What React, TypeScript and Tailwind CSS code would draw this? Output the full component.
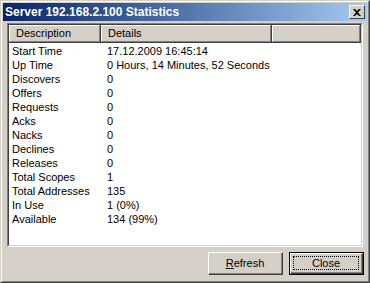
const rows: [string, string][] = [
  ["Start Time", "17.12.2009 16:45:14"],
  ["Up Time", "0 Hours, 14 Minutes, 52 Seconds"],
  ["Discovers", "0"],
  ["Offers", "0"],
  ["Requests", "0"],
  ["Acks", "0"],
  ["Nacks", "0"],
  ["Declines", "0"],
  ["Releases", "0"],
  ["Total Scopes", "1"],
  ["Total Addresses", "135"],
  ["In Use", "1 (0%)"],
  ["Available", "134 (99%)"],
]

function HeaderCell({ label, width }: { label: string; width: string }) {
  return (
    <div
      className={`${width} h-full border-r border-b border-r-[#404040] border-b-[#404040]`}
    >
      <div className="h-full border-t border-l border-r border-b border-t-white border-l-white border-r-[#808080] border-b-[#808080] bg-[#D4D0C8] pl-[6px] flex items-center">
        {label}
      </div>
    </div>
  )
}

export default function App() {
  return (
    <div
      className="w-[370px] h-[283px] bg-[#D4D0C8] text-[11px] text-black border border-t-[#D4D0C8] border-l-[#D4D0C8] border-r-[#404040] border-b-[#404040] flex"
      style={{ fontFamily: '"Liberation Sans", Arial, sans-serif' }}
    >
      <div className="flex-1 flex flex-col border border-t-white border-l-white border-r-[#808080] border-b-[#808080] p-px">
        {/* TITLE BAR */}
        <div className="h-[18px] flex items-center justify-between bg-gradient-to-r from-[#0A246A] to-[#A6CAF0] pl-[2px] pr-[2px]">
          <span className="text-white font-bold text-[12px] leading-none">
            Server 192.168.2.100 Statistics
          </span>
          <div className="w-4 h-[14px] bg-[#D4D0C8] border border-t-white border-l-white border-r-[#404040] border-b-[#404040] flex items-center justify-center">
            <svg width="8" height="7" viewBox="0 0 8 7">
              <path d="M0 0h2l2 2 2-2h2L5 3.5 8 7H6L4 5 2 7H0l3-3.5z" fill="#000" />
            </svg>
          </div>
        </div>

        {/* LIST */}
        <div className="mt-[2px] ml-[4px] mr-[4px] h-[224px] border border-t-[#808080] border-l-[#808080] border-r-white border-b-white">
          <div className="h-full border border-t-[#404040] border-l-[#404040] border-r-[#D4D0C8] border-b-[#D4D0C8] bg-white flex flex-col">
            <div className="h-[18px] flex bg-[#D4D0C8]">
              <HeaderCell label="Description" width="w-[92px]" />
              <HeaderCell label="Details" width="w-[171px]" />
              <div className="flex-1 h-full border-r border-b border-r-[#404040] border-b-[#404040]">
                <div className="h-full border-t border-l border-r border-b border-t-white border-l-white border-r-[#808080] border-b-[#808080]" />
              </div>
            </div>
            <div className="pt-px">
              {rows.map(([name, value]) => (
                <div key={name} className="flex h-[14px] leading-[14px]">
                  <div className="w-[92px] pl-[3px]">{name}</div>
                  <div className="pl-[6px]">{value}</div>
                </div>
              ))}
            </div>
          </div>
        </div>

        {/* BUTTONS */}
        <div className="flex justify-end gap-[6px] mt-[5px] mr-[3px]">
          <button className="w-[75px] h-[23px] border border-t-white border-l-white border-r-[#404040] border-b-[#404040]">
            <div className="h-full border-r border-b border-r-[#808080] border-b-[#808080] flex items-center justify-center">
              <span>
                <span className="underline">R</span>efresh
              </span>
            </div>
          </button>
          <button className="w-[75px] h-[23px] border border-black">
            <div className="h-full border border-t-white border-l-white border-r-[#404040] border-b-[#404040]">
              <div className="h-full border-r border-b border-r-[#808080] border-b-[#808080] p-[2px]">
                <div className="h-full border border-dotted border-black flex items-center justify-center">
                  Close
                </div>
              </div>
            </div>
          </button>
        </div>
      </div>
    </div>
  )
}
